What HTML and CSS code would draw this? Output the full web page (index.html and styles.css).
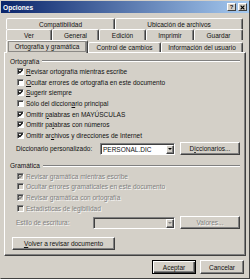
FILE: index.html
```html
<!DOCTYPE html>
<html lang="es">
<head>
<meta charset="utf-8">
<title>Opciones</title>
<link rel="stylesheet" href="styles.css">
</head>
<body>
<div class="window">
  <div class="titlebar">
    <span class="title">Opciones</span>
    <div class="tbtns">
      <span class="tbtn">?</span>
      <span class="tbtn"><svg width="5" height="5" viewBox="0 0 5 5"><path d="M0.6 0.6L4.4 4.4M4.4 0.6L0.6 4.4" stroke="#000" stroke-width="1.2"/></svg></span>
    </div>
  </div>
  <div class="main">
    <div class="tabs">
      <div class="tabrow">
        <div class="tab t-compat">Compatibilidad</div>
        <div class="tab t-ubic">Ubicación de archivos</div>
      </div>
      <div class="tabrow">
        <div class="tab t-ver">Ver</div>
        <div class="tab t-gen">General</div>
        <div class="tab t-edi">Edición</div>
        <div class="tab t-imp">Imprimir</div>
        <div class="tab t-gua">Guardar</div>
      </div>
      <div class="tabrow front">
        <div class="tab sel t-orto"><span class="focus">Ortografía y gramática</span></div>
        <div class="tab t-ctrl">Control de cambios</div>
        <div class="tab t-info">Información del usuario</div>
      </div>
    </div>
    <div class="panel">
      <div class="ghead first"><span>Ortografía</span><span class="gline"></span></div>
      <div class="crow"><span class="cb"><svg viewBox="0 0 5 5"><path d="M0.4 2.1L1.9 3.6L4.6 0.8" fill="none" stroke="#000" stroke-width="1.3"/></svg></span><span><u>R</u>evisar ortografía mientras escribe</span></div>
      <div class="crow"><span class="cb"></span><span><u>O</u>cultar errores de ortografía en este documento</span></div>
      <div class="crow"><span class="cb"><svg viewBox="0 0 5 5"><path d="M0.4 2.1L1.9 3.6L4.6 0.8" fill="none" stroke="#000" stroke-width="1.3"/></svg></span><span><u>S</u>ugerir siempre</span></div>
      <div class="crow"><span class="cb"></span><span>Sólo del diccion<u>a</u>rio principal</span></div>
      <div class="crow"><span class="cb"><svg viewBox="0 0 5 5"><path d="M0.4 2.1L1.9 3.6L4.6 0.8" fill="none" stroke="#000" stroke-width="1.3"/></svg></span><span>Omitir <u>p</u>alabras en MAYÚSCULAS</span></div>
      <div class="crow"><span class="cb"><svg viewBox="0 0 5 5"><path d="M0.4 2.1L1.9 3.6L4.6 0.8" fill="none" stroke="#000" stroke-width="1.3"/></svg></span><span>Omitir pa<u>l</u>abras con números</span></div>
      <div class="crow"><span class="cb"><svg viewBox="0 0 5 5"><path d="M0.4 2.1L1.9 3.6L4.6 0.8" fill="none" stroke="#000" stroke-width="1.3"/></svg></span><span>Omitir ar<u>c</u>hivos y direcciones de Internet</span></div>
      <div class="frow dictrow">
        <span class="flabel l-dict">Diccionario personalizado:</span>
        <div class="combo c-dict"><span class="ctext">PERSONAL.DIC</span><span class="arrow"><span class="tri"></span></span></div>
        <div class="btn side">D<u>i</u>ccionarios...</div>
      </div>
      <div class="ghead second"><span>Gramática</span><span class="gline"></span></div>
      <div class="crow dis"><span class="cb off"><svg viewBox="0 0 5 5"><path d="M0.4 2.1L1.9 3.6L4.6 0.8" fill="none" stroke="#808080" stroke-width="1.3"/></svg></span><span>Revisar gramática mientras escribe</span></div>
      <div class="crow dis"><span class="cb off"></span><span>Ocultar errores gramaticales en este documento</span></div>
      <div class="crow dis"><span class="cb off"><svg viewBox="0 0 5 5"><path d="M0.4 2.1L1.9 3.6L4.6 0.8" fill="none" stroke="#808080" stroke-width="1.3"/></svg></span><span>Revisar gramática con ortografía</span></div>
      <div class="crow dis"><span class="cb off"></span><span>Estadísticas de legibilidad</span></div>
      <div class="frow stylerow">
        <span class="flabel l-style dis">Estilo de escritura:</span>
        <div class="combo c-style off"><span class="ctext"></span><span class="arrow"><span class="tri gray"></span></span></div>
        <div class="btn side dis">Valores...</div>
      </div>
      <div class="btn recheck"><u>V</u>olver a revisar documento</div>
    </div>
    <div class="footer">
      <div class="btn foot default">Aceptar</div>
      <div class="btn foot">Cancelar</div>
    </div>
  </div>
</div>
</body>
</html>
```
FILE: styles.css
```css
html, body {
  margin: 0;
  padding: 0;
  background: #d4d0c8;
}

.window {
  width: 250px;
  height: 279px;
  box-sizing: border-box;
  border: 1px solid;
  border-color: #d4d0c8 #404040 #404040 #d4d0c8;
  background: #d4d0c8;
  font-family: "Liberation Sans", Arial, sans-serif;
  font-size: 6.5px;
  color: #111;
  display: flex;
  flex-direction: column;
  overflow: hidden;
}

.titlebar {
  height: 12px;
  flex: none;
  background: linear-gradient(to right, #0a246a, #a6caf0);
  display: flex;
  align-items: center;
  padding: 0 2px;
}

.title {
  flex: 1;
  color: #fff;
  font-weight: bold;
  font-size: 6.6px;
}

.tbtns {
  display: flex;
  gap: 2px;
}

.tbtn {
  width: 9px;
  height: 8px;
  box-sizing: border-box;
  background: #d4d0c8;
  border: 1px solid;
  border-color: #fff #404040 #404040 #fff;
  display: flex;
  align-items: center;
  justify-content: center;
  font-weight: bold;
  font-size: 6px;
  line-height: 1;
}

.tbtn svg {
  display: block;
}

.main {
  padding: 5px 3px 0 3px;
}

.tabs {
  margin-left: 2px;
  width: 237px;
}

.tabrow {
  display: flex;
  height: 11px;
}

.tab {
  box-sizing: border-box;
  height: 11px;
  border: 1px solid;
  border-bottom: none;
  border-color: #fff #404040 transparent #fff;
  box-shadow: inset -1px 0 #808080;
  border-radius: 2px 2px 0 0;
  display: flex;
  align-items: center;
  justify-content: center;
  white-space: nowrap;
  background: #d4d0c8;
}

.tabrow.front {
  height: 12px;
  align-items: flex-end;
}

.front .tab {
  height: 10px;
}

.front .tab.sel {
  height: 13px;
  margin-bottom: -1px;
  position: relative;
  z-index: 1;
  align-items: flex-start;
}

.focus {
  box-sizing: border-box;
  width: 78px;
  height: 11px;
  border: 1px solid #8c8a86;
  display: flex;
  align-items: center;
  justify-content: center;
}

.t-compat { width: 109px; }
.t-ubic { width: 128px; }
.t-ver { width: 46px; }
.t-gen { width: 47px; }
.t-edi { width: 47px; }
.t-imp { width: 48px; }
.t-gua { width: 49px; }
.t-orto { width: 82px; }
.t-ctrl { width: 73px; }
.t-info { width: 82px; }

.panel {
  height: 204px;
  box-sizing: border-box;
  border: 1px solid;
  border-color: #fff #404040 #404040 #fff;
  box-shadow: inset -1px -1px #808080;
  display: flex;
  flex-direction: column;
}

.ghead {
  display: flex;
  align-items: center;
  gap: 3px;
  height: 10px;
  margin: 3px 5px 0 5px;
  flex: none;
}

.ghead.second {
  margin-top: 5px;
}

.gline {
  flex: 1;
  height: 0;
  border-top: 1px solid #808080;
  border-bottom: 1px solid #fff;
}

.crow {
  display: flex;
  align-items: center;
  gap: 2px;
  height: 10.7px;
  padding-left: 12px;
  white-space: nowrap;
  flex: none;
}

.cb {
  box-sizing: border-box;
  width: 7px;
  height: 7px;
  border: 1px solid;
  border-color: #808080 #fff #fff #808080;
  box-shadow: inset 1px 1px #404040;
  background: #fff;
  flex: none;
}

.cb.off {
  background: #d4d0c8;
}

.cb svg {
  display: block;
  width: 5px;
  height: 5px;
}

.dis {
  color: #808080;
  text-shadow: 1px 1px 0 rgba(255, 255, 255, 0.85);
}

.frow {
  display: flex;
  align-items: center;
  height: 14px;
  padding-left: 11px;
  flex: none;
  white-space: nowrap;
}

.dictrow {
  margin-top: 1.1px;
}

.stylerow {
  margin-top: 2.2px;
}

.l-dict { width: 84px; }
.l-style { width: 77px; }

.combo {
  box-sizing: border-box;
  height: 12px;
  display: flex;
  align-items: stretch;
  border: 1px solid;
  border-color: #808080 #fff #fff #808080;
  box-shadow: inset 1px 1px #404040;
  background: #fff;
  padding: 1px 0 0 1px;
}

.combo.off {
  background: #d4d0c8;
}

.c-dict { width: 75px; }
.c-style { width: 82px; }

.ctext {
  flex: 1;
  display: flex;
  align-items: center;
  padding-left: 1px;
}

.arrow {
  box-sizing: border-box;
  width: 8px;
  background: #d4d0c8;
  border: 1px solid;
  border-color: #fff #404040 #404040 #fff;
  box-shadow: inset -1px -1px #808080;
  display: flex;
  align-items: center;
  justify-content: center;
}

.tri {
  width: 0;
  height: 0;
  border-left: 2px solid transparent;
  border-right: 2px solid transparent;
  border-top: 2px solid #000;
}

.tri.gray {
  border-top-color: #808080;
}

.btn {
  box-sizing: border-box;
  border: 1px solid;
  border-color: #fff #404040 #404040 #fff;
  box-shadow: inset -1px -1px #808080;
  background: #d4d0c8;
  display: flex;
  align-items: center;
  justify-content: center;
  white-space: nowrap;
}

.btn.side {
  width: 60px;
  height: 13px;
  margin-left: 5px;
}

.btn.recheck {
  width: 103px;
  height: 13px;
  margin: 7px 0 0 7px;
  flex: none;
}

.footer {
  display: flex;
  justify-content: flex-end;
  gap: 4px;
  padding: 4px 2px 0 0;
}

.btn.foot {
  width: 44px;
  height: 14px;
}

.btn.default {
  border-color: #000;
  box-shadow: inset 1px 1px #fff, inset -1px -1px #404040, inset -2px -2px #808080;
}
```
